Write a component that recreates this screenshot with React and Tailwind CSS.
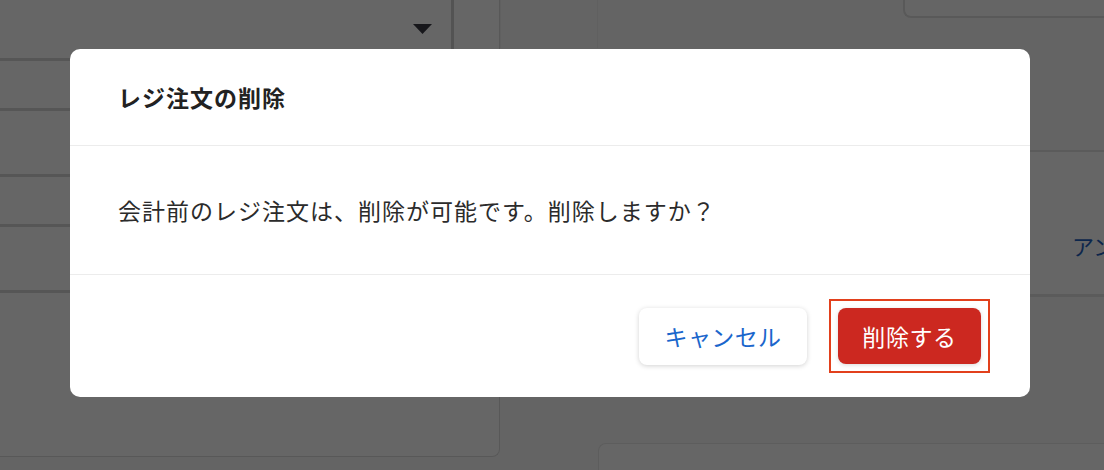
import React from "react";

const jp = { fontFamily: '"Noto Sans CJK JP", "Noto Sans", sans-serif' };

function Background() {
  return (
    <div className="relative h-[470px] w-[1104px] overflow-hidden bg-[#fafafa]" style={jp}>
      <div className="flex h-full">
        {/* left card */}
        <div className="flex h-[457px] w-[500px] shrink-0 flex-col rounded-br-[8px] border-r border-b border-[#dcdcdc] bg-white">
          <div className="flex h-[61px] shrink-0 border-b-[3px] border-[#d6d6d6]">
            <div className="flex w-[454px] items-start justify-end border-r-[3px] border-[#cfcfcf] pr-[19px] pt-[24px]">
              <svg width="19" height="10" viewBox="0 0 19 10">
                <path d="M0 0 L19 0 L9.5 10 Z" fill="#3a3a44" />
              </svg>
            </div>
          </div>
          <div className="h-[50px] shrink-0 border-b-[3px] border-[#d6d6d6]" />
          <div className="h-[66px] shrink-0 border-b-[3px] border-[#d6d6d6]" />
          <div className="h-[50px] shrink-0 border-b-[3px] border-[#d6d6d6]" />
          <div className="h-[66px] shrink-0 border-b-[3px] border-[#d6d6d6]" />
        </div>
        {/* middle column */}
        <div className="flex w-[98px] shrink-0 flex-col">
          <div className="h-[48px] border-x border-[#f0f0f0] bg-[#f9f9f9]" />
        </div>
        {/* right area */}
        <div className="flex min-w-0 flex-1 flex-col">
          <div className="flex h-[18px] shrink-0 justify-end">
            <div className="w-[201px] rounded-bl-[8px] border-b-2 border-l-2 border-[#dedede] bg-[#fcfcfc]" />
          </div>
          <div className="mt-[132px] h-[147px] shrink-0 overflow-hidden border-t-2 border-b-[3px] border-[#e4e4e4] bg-white pl-[474px] pt-[78px]">
            <span className="whitespace-nowrap text-[22px] leading-[30px] text-[#1f5fbf]">アン</span>
          </div>
          <div className="mt-[146px] h-[27px] shrink-0 rounded-tl-[8px] border-t border-l border-[#e8e8e8] bg-white" />
        </div>
      </div>
    </div>
  );
}

export default function App() {
  return (
    <div className="relative h-[470px] w-[1104px] overflow-hidden">
      <Background />
      <div className="absolute inset-0 bg-black/60" />
      <div className="absolute inset-0 flex items-start justify-start pl-[70px] pt-[49px]" style={jp}>
        <div className="flex h-[348px] w-[960px] flex-col rounded-[10px] bg-white">
          <div className="flex h-[97px] items-center border-b border-[#ececec] pl-[48px]">
            <h2 className="text-[23px] font-bold tracking-[1px] text-[#222]">レジ注文の削除</h2>
          </div>
          <div className="flex h-[129px] items-center border-b border-[#ececec] pl-[48px]">
            <p className="text-[23px] tracking-[1px] text-[#2b2b2b]">
              会計前のレジ注文は、削除が可能です。削除しますか？
            </p>
          </div>
          <div className="flex flex-1 items-center justify-end gap-[22px] pr-[40px]">
            <button className="flex h-[57px] w-[168px] items-center justify-center rounded-[8px] bg-white text-[23px] tracking-[0.4px] text-[#1a66cc] shadow-[0_1px_5px_rgba(0,0,0,0.18)]">
              キャンセル
            </button>
            <span className="flex border-2 border-[#e2401c] p-[7px]">
              <button className="flex h-[56px] w-[143px] items-center justify-center rounded-[8px] bg-[#cc2820] text-[23px] tracking-[0.6px] text-white shadow-[0_1px_4px_rgba(0,0,0,0.15)]">
                削除する
              </button>
            </span>
          </div>
        </div>
      </div>
    </div>
  );
}
